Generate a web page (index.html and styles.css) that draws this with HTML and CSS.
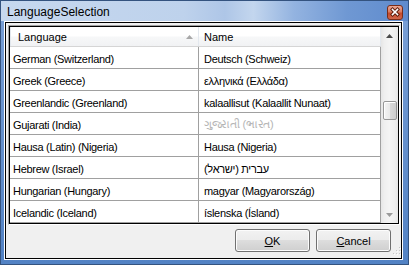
FILE: index.html
```html
<!DOCTYPE html>
<html>
<head>
<meta charset="utf-8">
<title>LanguageSelection</title>
<link rel="stylesheet" href="styles.css">
</head>
<body>
<div class="window">
  <div class="titlebar">
    <span class="title">LanguageSelection</span>
    <span class="close">
      <svg width="14" height="13" viewBox="0 0 14 13">
        <path d="M4.5 3.5 L9.5 8.5 M9.5 3.5 L4.5 8.5" stroke="#5a1a0a" stroke-width="3.4" stroke-linecap="square" fill="none"/>
        <path d="M4.5 3.5 L9.5 8.5 M9.5 3.5 L4.5 8.5" stroke="#ffffff" stroke-width="1.6" stroke-linecap="square" fill="none"/>
      </svg>
    </span>
  </div>
  <div class="frame">
    <div class="client">
      <div class="list">
        <div class="list-inner">
          <div class="table">
            <div class="header">
              <div class="hcell lang">Language
                <svg class="sort" width="7" height="4" viewBox="0 0 7 4"><polygon points="0,4 3.5,0 7,4" fill="#a8a8a8"/></svg>
              </div>
              <div class="hcell name">Name</div>
            </div>
            <div class="rows">
              <div class="cell c1">German (Switzerland)</div><div class="cell c2">Deutsch (Schweiz)</div>
              <div class="cell c1">Greek (Greece)</div><div class="cell c2">ελληνικά (Ελλάδα)</div>
              <div class="cell c1">Greenlandic (Greenland)</div><div class="cell c2">kalaallisut (Kalaallit Nunaat)</div>
              <div class="cell c1">Gujarati (India)</div><div class="cell c2 faint">ગુજરાતી (ભારત)</div>
              <div class="cell c1">Hausa (Latin) (Nigeria)</div><div class="cell c2">Hausa (Nigeria)</div>
              <div class="cell c1">Hebrew (Israel)</div><div class="cell c2"><bdi dir="rtl">עברית (ישראל)</bdi></div>
              <div class="cell c1">Hungarian (Hungary)</div><div class="cell c2">magyar (Magyarország)</div>
              <div class="cell c1">Icelandic (Iceland)</div><div class="cell c2">íslenska (Ísland)</div>
            </div>
          </div>
          <div class="scrollbar">
            <div class="sb-btn">
              <svg width="7" height="4" viewBox="0 0 7 4"><polygon points="0,4 3.5,0 7,4" fill="#4a4a4a"/></svg>
            </div>
            <div class="sb-track"><div class="thumb"></div></div>
            <div class="sb-btn">
              <svg width="7" height="4" viewBox="0 0 7 4"><polygon points="0,0 7,0 3.5,4" fill="#9a9a9a"/></svg>
            </div>
          </div>
        </div>
      </div>
      <div class="buttons">
        <button class="btn"><u>O</u>K</button>
        <button class="btn"><u>C</u>ancel</button>
      </div>
      <svg class="grip" width="11" height="11" viewBox="0 0 11 11">
        <rect x="9" y="1" width="1" height="1" fill="#c8c8c8"/>
        <rect x="6" y="4" width="1" height="1" fill="#c8c8c8"/>
        <rect x="9" y="4" width="1" height="1" fill="#c8c8c8"/>
        <rect x="3" y="7" width="1" height="1" fill="#c8c8c8"/>
        <rect x="6" y="7" width="1" height="1" fill="#c8c8c8"/>
        <rect x="9" y="7" width="1" height="1" fill="#c8c8c8"/>
        <rect x="10" y="2" width="1" height="1" fill="#fff"/>
        <rect x="7" y="5" width="1" height="1" fill="#fff"/>
        <rect x="10" y="5" width="1" height="1" fill="#fff"/>
        <rect x="4" y="8" width="1" height="1" fill="#fff"/>
        <rect x="7" y="8" width="1" height="1" fill="#fff"/>
        <rect x="10" y="8" width="1" height="1" fill="#fff"/>
      </svg>
    </div>
  </div>
</div>
</body>
</html>
```

FILE: styles.css
```css
html, body {
  margin: 0;
  padding: 0;
  background: #ffffff;
}

body {
  font-family: "Liberation Sans", Arial, sans-serif;
  color: #000;
}

.window {
  width: 409px;
  height: 265px;
  box-sizing: border-box;
  border: 1px solid #34537f;
  background: linear-gradient(#7aa0d6, #5282c4);
  padding: 0 5px 4px 3px;
  display: flex;
  flex-direction: column;
}

.titlebar {
  height: 20px;
  flex: none;
  margin: 0 -5px 0 -3px;
  display: flex;
  align-items: flex-start;
  background: linear-gradient(to right, #c6d8ef 0%, #bed2ec 45%, #aec6e7 55%, #c3d6ee 62%, #93b3e0 72%, #6f98d3 85%, #5f8bcd 100%);
}

.title {
  font-size: 12px;
  line-height: 14px;
  margin: 4px 0 0 6px;
  color: #000;
}

.close {
  margin: 4px 5px 0 auto;
  width: 16px;
  height: 15px;
  box-sizing: border-box;
  border: 1px solid #7a2c18;
  border-radius: 3px;
  background: linear-gradient(#eaa895 0%, #d97a5f 45%, #c4492a 55%, #d0664a 100%);
  display: flex;
  align-items: center;
  justify-content: center;
}

.close svg {
  display: block;
}

.frame {
  flex: 1;
  border: 1px solid #ffffff;
  display: flex;
}

.client {
  flex: 1;
  border: 1px solid #000;
  background: #f0f0f0;
  position: relative;
  display: flex;
  flex-direction: column;
}

.list {
  margin: 2px 1px 0 2px;
  height: 200px;
  box-sizing: border-box;
  border: 1px solid;
  border-color: #a0a0a0 #ffffff #ffffff #a0a0a0;
  flex: none;
}

.list-inner {
  height: 100%;
  box-sizing: border-box;
  border: 1px solid #000;
  background: #fff;
  display: flex;
}

.table {
  width: 371px;
  flex: none;
}

.header {
  height: 20px;
  display: flex;
  box-sizing: border-box;
  background: linear-gradient(#ffffff 0%, #ffffff 45%, #f6f7f8 55%, #f1f2f4 100%);
  border-bottom: 1px solid #d5d5d5;
}

.hcell {
  font-size: 11px;
  display: flex;
  align-items: center;
  box-sizing: border-box;
  position: relative;
}

.hcell.lang {
  width: 189px;
  padding-left: 7px;
  border-left: 1px solid #e3e8ee;
  border-right: 1px solid #e3e8ee;
}

.hcell.name {
  flex: 1;
  padding-left: 5px;
  border-right: 1px solid #e3e8ee;
}

.sort {
  position: absolute;
  left: 175px;
  top: 8px;
}

.rows {
  display: grid;
  grid-template-columns: 189px 182px;
  grid-auto-rows: 22px;
}

.cell {
  font-size: 11px;
  letter-spacing: -0.3px;
  box-sizing: border-box;
  border-bottom: 1px solid #a0a0a0;
  display: flex;
  align-items: center;
  padding-top: 2px;
  white-space: nowrap;
  overflow: hidden;
}

.cell.c1 {
  padding-left: 3px;
  border-right: 1px solid #a0a0a0;
}

.cell.c2 {
  padding-left: 5px;
  border-right: 1px solid #a0a0a0;
}

.cell.faint {
  color: #b4b4b4;
}

.scrollbar {
  width: 17px;
  flex: none;
  display: flex;
  flex-direction: column;
  background: linear-gradient(to right, #e6e6e6 0%, #efefef 20%, #f4f4f4 50%, #efefef 80%, #e6e6e6 100%);
}

.sb-btn {
  height: 17px;
  flex: none;
  display: flex;
  align-items: center;
  justify-content: center;
}

.sb-btn svg {
  display: block;
}

.sb-track {
  flex: 1;
}

.thumb {
  margin: 57px 1px 0 2px;
  height: 19px;
  box-sizing: border-box;
  border: 1px solid #979797;
  border-radius: 2px;
  background: linear-gradient(to right, #f4f4f4 0%, #e9e9e9 50%, #d9d9d9 51%, #cdcdcd 100%);
  box-shadow: inset 1px 1px 0 #ffffff;
}

.buttons {
  display: flex;
  justify-content: flex-end;
  gap: 6px;
  margin-top: 4px;
  padding-right: 10px;
}

.btn {
  width: 75px;
  height: 23px;
  box-sizing: border-box;
  padding: 0;
  font-family: "Liberation Sans", Arial, sans-serif;
  font-size: 11px;
  color: #000;
  border: 1px solid #707070;
  border-radius: 3px;
  background: linear-gradient(#f2f2f2 0%, #ebebeb 50%, #dddddd 50%, #cfcfcf 100%);
  box-shadow: inset 0 0 0 1px #fcfcfc;
}

.grip {
  position: absolute;
  right: 0;
  bottom: 1px;
}
```
